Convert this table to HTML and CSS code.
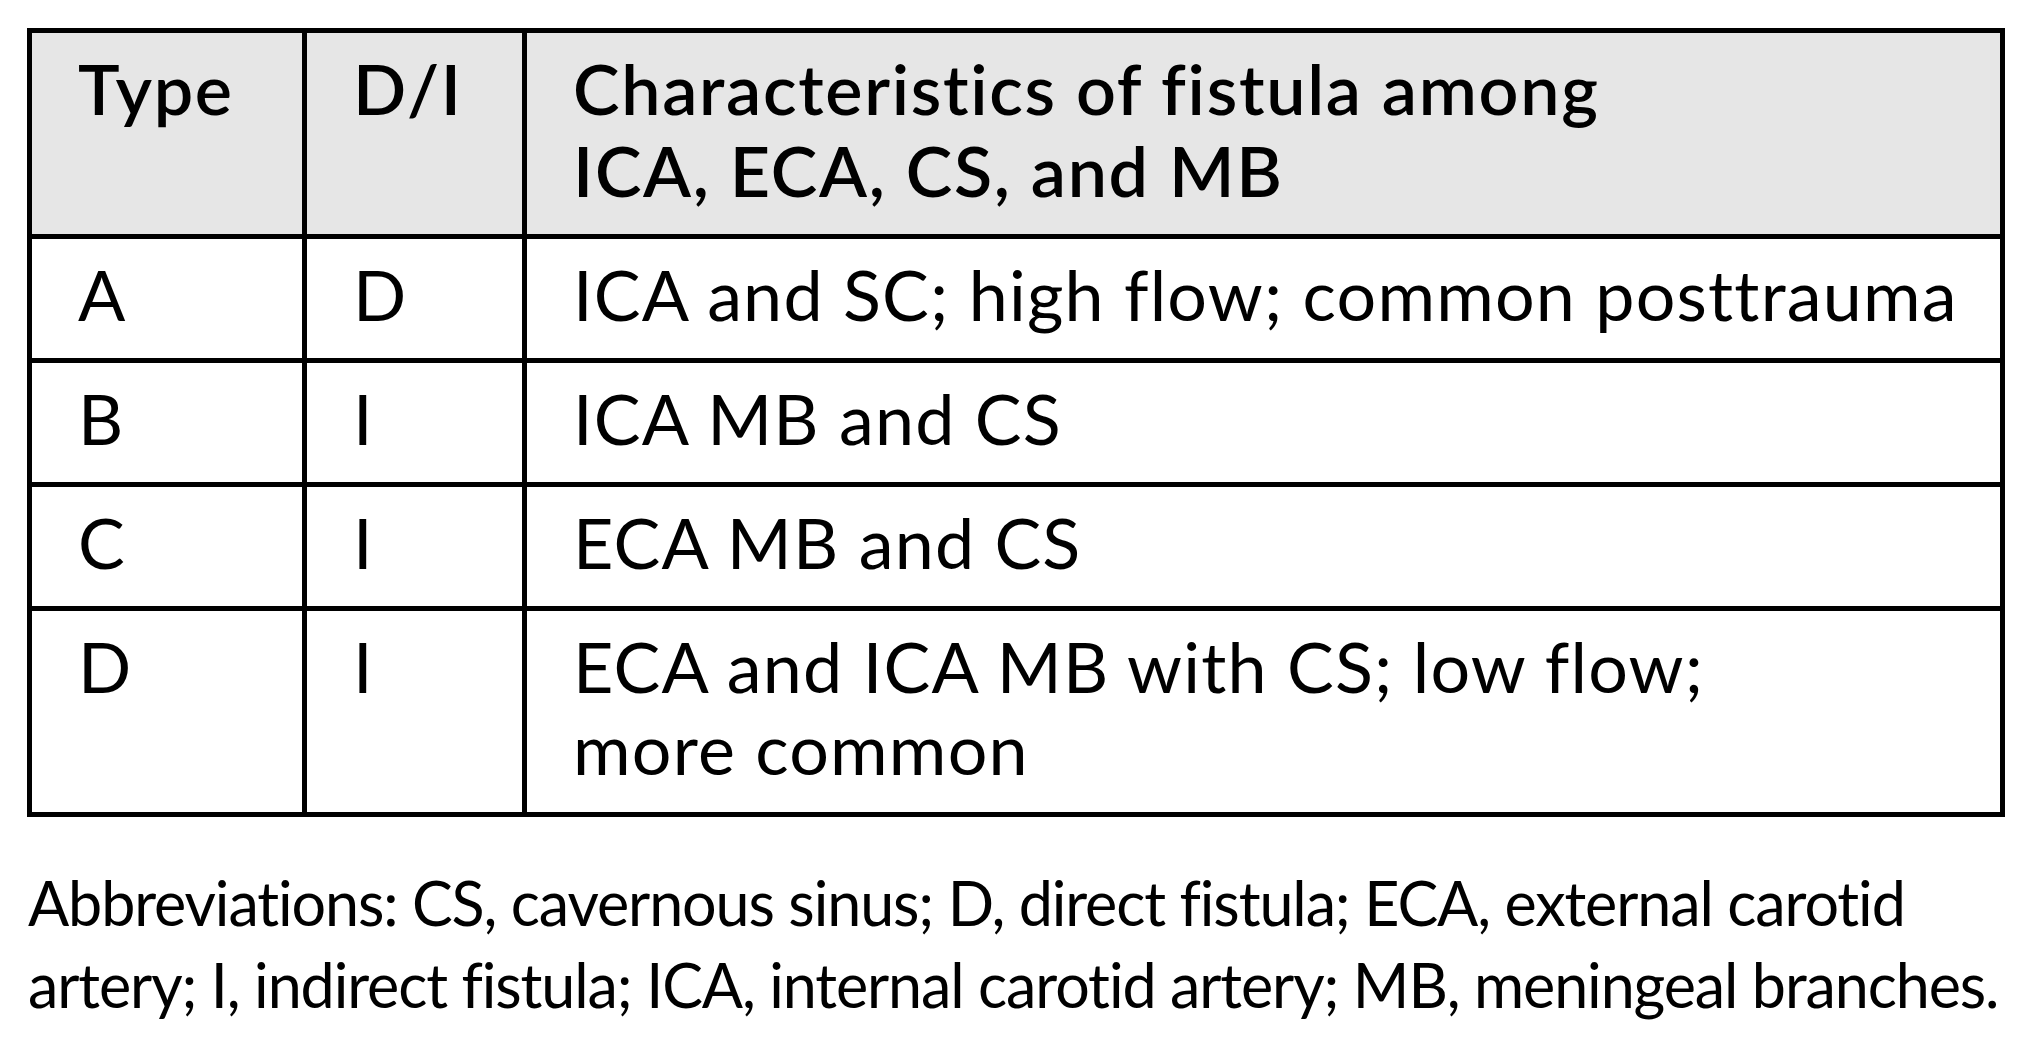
FILE: index.html
```html
<!DOCTYPE html>
<html lang="en">
<head>
<meta charset="utf-8">
<title>Carotid-cavernous fistula types</title>
<link rel="stylesheet" href="styles.css">
</head>
<body>
<div class="page">
  <table class="fistula">
    <thead>
      <tr>
        <th class="c-type">Type</th>
        <th class="c-di">D/I</th>
        <th class="c-char">Characteristics of fistula among<br>ICA, ECA, CS, and MB</th>
      </tr>
    </thead>
    <tbody>
      <tr>
        <td class="c-type">A</td>
        <td class="c-di">D</td>
        <td class="c-char">ICA and SC; high flow; common posttrauma</td>
      </tr>
      <tr>
        <td class="c-type">B</td>
        <td class="c-di">I</td>
        <td class="c-char">ICA MB and CS</td>
      </tr>
      <tr>
        <td class="c-type">C</td>
        <td class="c-di">I</td>
        <td class="c-char">ECA MB and CS</td>
      </tr>
      <tr>
        <td class="c-type">D</td>
        <td class="c-di">I</td>
        <td class="c-char">ECA and ICA MB with CS; low flow;<br>more common</td>
      </tr>
    </tbody>
  </table>
  <p class="note">Abbreviations: CS, cavernous sinus; D, direct fistula; ECA, external carotid<br>artery; I, indirect fistula; ICA, internal carotid artery; MB, meningeal branches.</p>
</div>
</body>
</html>
```

FILE: styles.css
```css
html, body {
  margin: 0;
  padding: 0;
  background: #ffffff;
}

.page {
  padding: 28px 0 0 27px;
  font-family: "Lato", "Open Sans", sans-serif;
  font-variant-ligatures: none;
  color: #000000;
}

.fistula {
  width: 1978px;
  border: 5px solid #000000;
  border-spacing: 0;
  table-layout: fixed;
}

.fistula th,
.fistula td {
  box-sizing: border-box;
  font-size: 70px;
  line-height: 82px;
  text-align: left;
  vertical-align: top;
  white-space: nowrap;
  padding: 14px 8px 23px 46px;
  border-right: 5px solid #000000;
  border-bottom: 5px solid #000000;
}

.fistula th {
  font-weight: 600;
  letter-spacing: 1.7px;
  background: #e6e6e6;
}

.fistula td {
  font-weight: 400;
  letter-spacing: 1.2px;
}

.fistula tbody tr:last-child td {
  border-bottom: none;
}

.fistula .c-char {
  border-right: none;
}

.fistula .c-type {
  width: 275px;
}

.fistula .c-di {
  width: 220px;
}

.note {
  margin: 45px 0 0 1px;
  font-size: 61px;
  line-height: 82px;
  letter-spacing: -1.1px;
  font-weight: 400;
  white-space: nowrap;
}
```
